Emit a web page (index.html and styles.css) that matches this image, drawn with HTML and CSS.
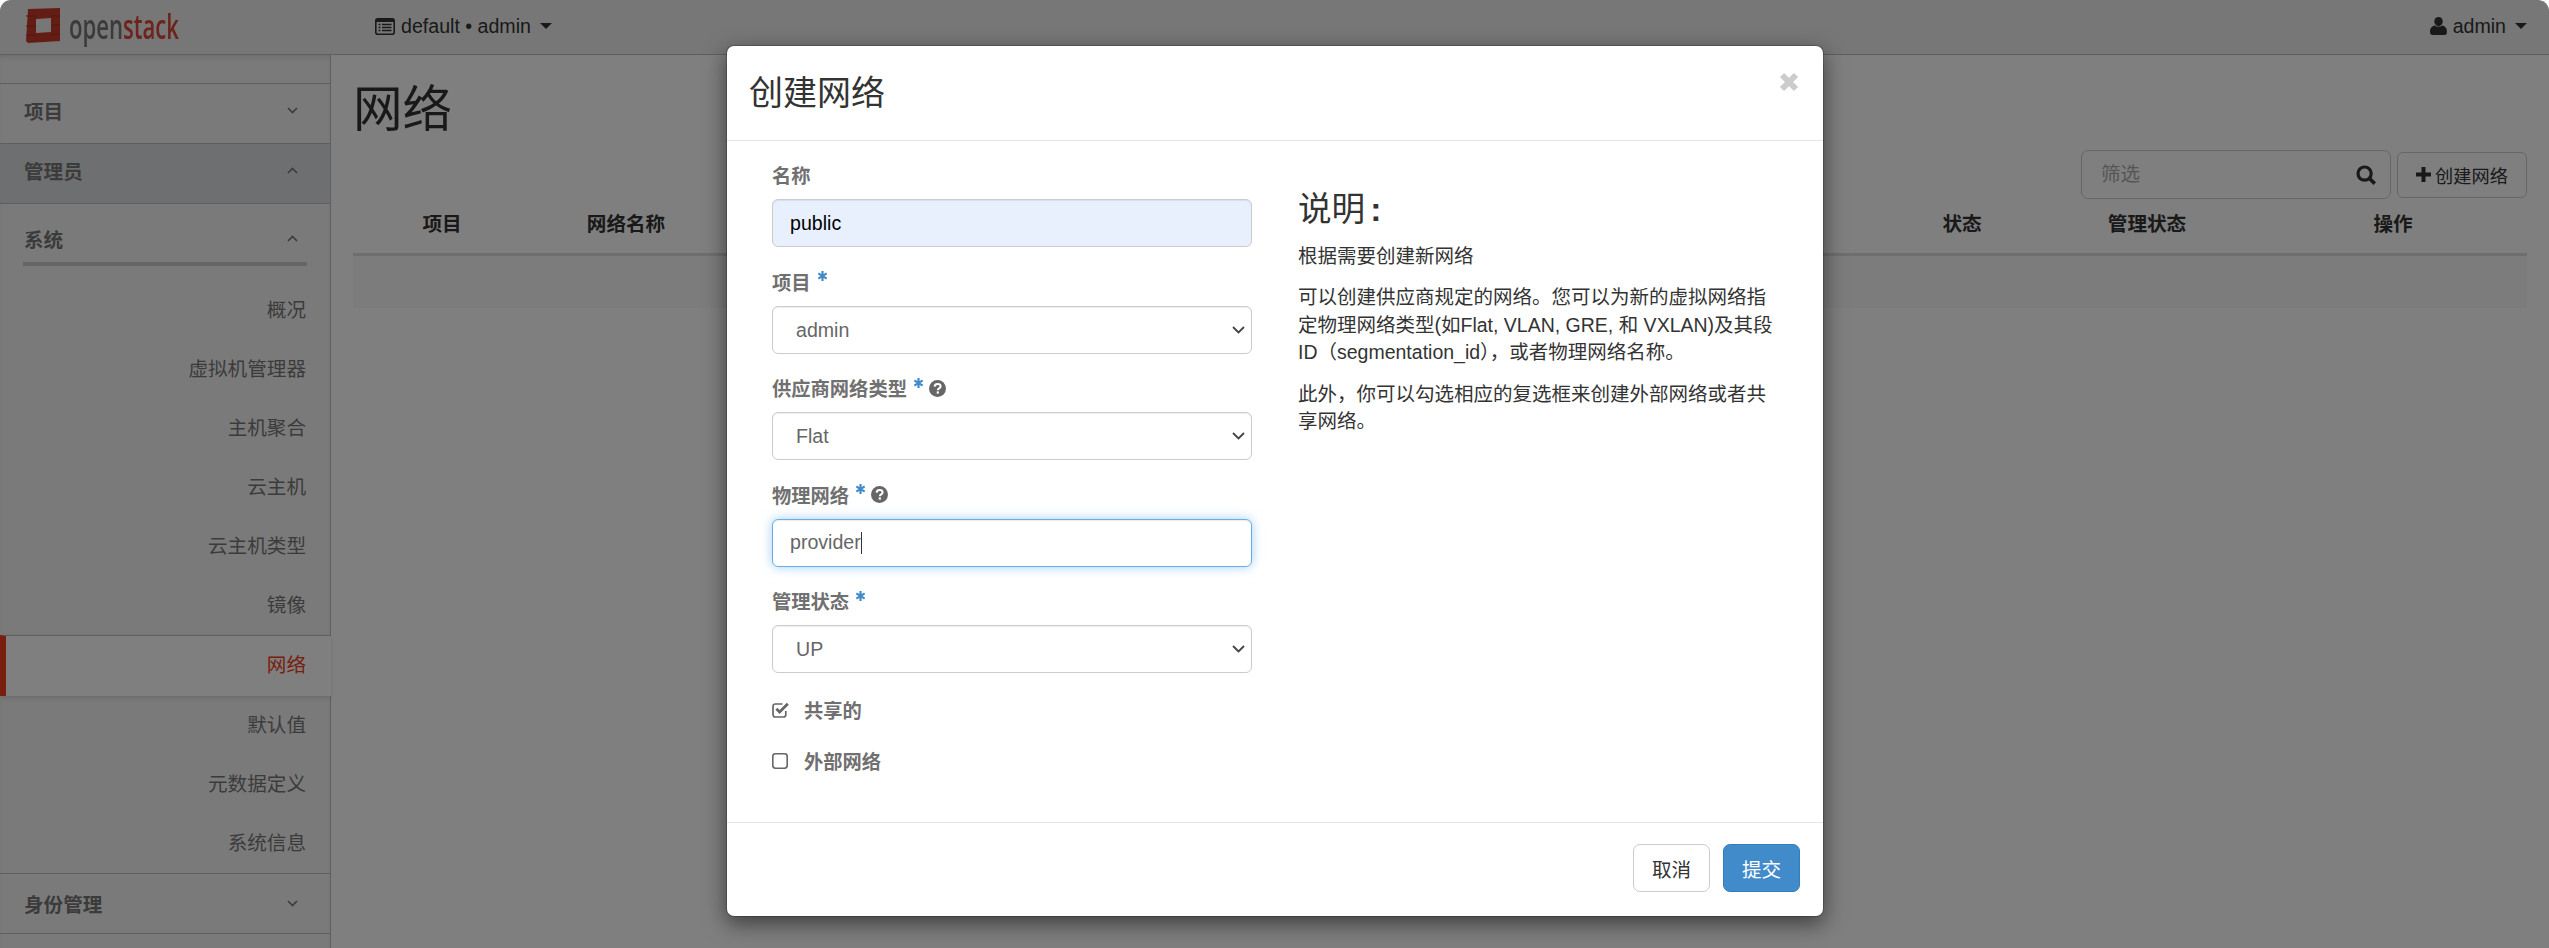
FILE: index.html
```html
<!DOCTYPE html>
<html>
  <head>
    <meta charset="utf-8">
    <meta name="viewport" content="width=device-width, initial-scale=1">
    <title>网络 - OpenStack Dashboard</title>
    <link rel="stylesheet" href="styles.css">
  </head>
  <body>
    <div class="page">

      <!-- navbar -->
      <div class="navbar">
        <div class="brand">
          <svg class="brand_mark" width="36" height="36" viewBox="0 0 36 36">
            <path d="M3 1L35 0L35 33L3 35L1 33Z M11 11L11 25L26 24L26 10Z" fill="#c93a2a" fill-rule="evenodd"/>
            <path d="M1 8H11M1 18H11M1 27H11M26 8H35M26 17H35M26 26H35" stroke="#a82a1c" stroke-width="1"/>
          </svg>
          <span class="brand_txt"><span class="brand_open">open</span><span class="brand_stack">stack</span></span>
        </div>
        <div class="nav_item">
          <svg width="20" height="17" viewBox="0 0 20 17">
            <rect x=".8" y=".8" width="18.4" height="15.4" rx="2" fill="none" stroke="#333" stroke-width="1.6"/>
            <path d="M1 1H19V4H1Z" fill="#333"/>
            <path d="M3.5 6.5H5.5M7 6.5H16.5M3.5 9.5H5.5M7 9.5H16.5M3.5 12.5H5.5M7 12.5H16.5" stroke="#333" stroke-width="1.6"/>
          </svg>
          <span>default • admin</span>
          <span class="caret"></span>
        </div>
        <div class="nav_item nav_right">
          <svg width="17" height="18" viewBox="0 0 17 18">
            <ellipse cx="8.5" cy="4.6" rx="4.2" ry="4.6" fill="#333"/>
            <path d="M0 15C0 11 2 9.2 4.8 8.6C6.8 10.2 10.2 10.2 12.2 8.6C15 9.2 17 11 17 15C17 17 16 18 14.5 18H2.5C1 18 0 17 0 15Z" fill="#333"/>
          </svg>
          <span>admin</span>
          <span class="caret"></span>
        </div>
      </div>

      <div class="main">

        <!-- sidebar -->
        <div class="sidebar">
          <div class="side_head">项目
            <svg class="chev" width="11" height="7" viewBox="0 0 11 7"><path d="M1 1L5.5 5.5L10 1"/></svg>
          </div>
          <div class="side_head side_head-open">管理员
            <svg class="chev" width="11" height="7" viewBox="0 0 11 7"><path d="M1 6L5.5 1.5L10 6"/></svg>
          </div>
          <div class="side_group">
            <span>系统</span>
            <svg class="chev" width="11" height="7" viewBox="0 0 11 7"><path d="M1 6L5.5 1.5L10 6"/></svg>
          </div>
          <a class="side_link">概况</a>
          <a class="side_link">虚拟机管理器</a>
          <a class="side_link">主机聚合</a>
          <a class="side_link">云主机</a>
          <a class="side_link">云主机类型</a>
          <a class="side_link">镜像</a>
          <a class="side_link side_link-active">网络</a>
          <a class="side_link">默认值</a>
          <a class="side_link">元数据定义</a>
          <a class="side_link">系统信息</a>
          <div class="side_head side_head-line">身份管理
            <svg class="chev" width="11" height="7" viewBox="0 0 11 7"><path d="M1 1L5.5 5.5L10 1"/></svg>
          </div>
        </div>

        <!-- content -->
        <div class="content">
          <h1 class="page_title">网络</h1>
          <div class="toolbar">
            <div class="filter_box">
              <input type="text" class="filter_input" placeholder="筛选">
              <svg width="21" height="20" viewBox="0 0 21 20">
                <circle cx="8.6" cy="8.6" r="6.6" fill="none" stroke="#333" stroke-width="3.2"/>
                <path d="M13.5 13.5L18.8 18.6" stroke="#333" stroke-width="3.6"/>
              </svg>
            </div>
            <button class="btn_create">
              <svg width="15" height="15" viewBox="0 0 15 15"><path d="M5.5 0H9.5V5.5H15V9.5H9.5V15H5.5V9.5H0V5.5H5.5Z" fill="#333"/></svg>
              创建网络
            </button>
          </div>
          <table class="net_table">
            <thead>
              <tr>
                <th class="col_project">项目</th>
                <th class="col_name">网络名称</th>
                <th class="col_hidden"></th>
                <th class="col_status">状态</th>
                <th class="col_admin">管理状态</th>
                <th class="col_action">操作</th>
              </tr>
            </thead>
            <tbody>
              <tr><td colspan="6"></td></tr>
            </tbody>
          </table>
        </div>
      </div>

      <div class="backdrop"></div>

      <!-- modal -->
      <div class="modal_wrap">
        <div class="modal">
          <div class="modal_header">
            <h3 class="modal_title">创建网络</h3>
            <svg class="modal_close" width="20" height="20" viewBox="0 0 20 20"><path d="M3 3L17 17M17 3L3 17" stroke="#ccc" stroke-width="6"/></svg>
          </div>
          <div class="modal_body">
            <div class="form_col">
              <div class="field">
                <label class="field_label">名称</label>
                <input type="text" class="form_ctrl form_ctrl-auto" value="public">
              </div>
              <div class="field">
                <label class="field_label">项目
                  <svg class="req" width="9" height="10" viewBox="0 0 9 10"><path d="M4.5 0V10M.3 2.5L8.7 7.5M8.7 2.5L.3 7.5" stroke="#428bca" stroke-width="2.2"/></svg>
                </label>
                <select class="form_ctrl form_select"><option>admin</option></select>
              </div>
              <div class="field">
                <label class="field_label">供应商网络类型
                  <svg class="req" width="9" height="10" viewBox="0 0 9 10"><path d="M4.5 0V10M.3 2.5L8.7 7.5M8.7 2.5L.3 7.5" stroke="#428bca" stroke-width="2.2"/></svg>
                  <svg class="help" width="17" height="17" viewBox="0 0 17 17">
                    <circle cx="8.5" cy="8.5" r="8.5" fill="#666"/>
                    <path d="M5.6 6.6C5.8 4.8 7 4 8.6 4C10.4 4 11.6 5 11.6 6.4C11.6 8.4 8.8 8.4 8.8 10.2" fill="none" stroke="#fff" stroke-width="2"/>
                    <rect x="7.7" y="11.4" width="2.2" height="2.2" fill="#fff"/>
                  </svg>
                </label>
                <select class="form_ctrl form_select"><option>Flat</option></select>
              </div>
              <div class="field">
                <label class="field_label">物理网络
                  <svg class="req" width="9" height="10" viewBox="0 0 9 10"><path d="M4.5 0V10M.3 2.5L8.7 7.5M8.7 2.5L.3 7.5" stroke="#428bca" stroke-width="2.2"/></svg>
                  <svg class="help" width="17" height="17" viewBox="0 0 17 17">
                    <circle cx="8.5" cy="8.5" r="8.5" fill="#666"/>
                    <path d="M5.6 6.6C5.8 4.8 7 4 8.6 4C10.4 4 11.6 5 11.6 6.4C11.6 8.4 8.8 8.4 8.8 10.2" fill="none" stroke="#fff" stroke-width="2"/>
                    <rect x="7.7" y="11.4" width="2.2" height="2.2" fill="#fff"/>
                  </svg>
                </label>
                <div class="caret_wrap">
                  <input type="text" class="form_ctrl form_ctrl-focus" value="provider">
                  <span class="text_caret"></span>
                </div>
              </div>
              <div class="field field-last">
                <label class="field_label">管理状态
                  <svg class="req" width="9" height="10" viewBox="0 0 9 10"><path d="M4.5 0V10M.3 2.5L8.7 7.5M8.7 2.5L.3 7.5" stroke="#428bca" stroke-width="2.2"/></svg>
                </label>
                <select class="form_ctrl form_select"><option>UP</option></select>
              </div>
              <div class="check_row">
                <svg width="18" height="16" viewBox="0 0 18 16">
                  <path d="M13.8 9V12.5C13.8 14 12.9 15 11.5 15H3.3C1.9 15 1 14 1 12.5V4.3C1 2.9 1.9 2 3.3 2H10.5" fill="none" stroke="#666" stroke-width="1.7"/>
                  <path d="M4.4 6.8L7.6 10L15.8 1.8" fill="none" stroke="#666" stroke-width="2.8"/>
                </svg>
                <span>共享的</span>
              </div>
              <div class="check_row">
                <svg width="18" height="16" viewBox="0 0 18 16">
                  <rect x=".8" y=".8" width="14.4" height="14.4" rx="2.6" fill="none" stroke="#666" stroke-width="1.6"/>
                </svg>
                <span>外部网络</span>
              </div>
            </div>
            <div class="help_col">
              <h3 class="help_title">说明<b class="help_colon">:</b></h3>
              <p>根据需要创建新网络</p>
              <p>可以创建供应商规定的网络。您可以为新的虚拟网络指定物理网络类型(如Flat, VLAN, GRE, 和 VXLAN)及其段ID（segmentation_id），或者物理网络名称。</p>
              <p>此外，你可以勾选相应的复选框来创建外部网络或者共享网络。</p>
            </div>
          </div>
          <div class="modal_footer">
            <button class="btn">取消</button>
            <button class="btn btn-primary">提交</button>
          </div>
        </div>
      </div>

    </div>
  </body>
</html>
```

FILE: styles.css
```css
html, body{
  margin: 0;
  padding: 0;
  height: 100%;
  background-color: #FFFFFF;
  overflow: hidden;
}
body, input, select, button{
  font-family: "Liberation Sans", "Noto Sans CJK SC", sans-serif;
  font-size: 19.6px;
}
.page{
  position: relative;
  height: 100%;
  background: #FFFFFF;
  color: #333333;
  border-radius: 11px 11px 0 0;
  overflow: hidden;
}
.backdrop{
  position: absolute;
  top: 0;
  left: 0;
  width: 100%;
  height: 100%;
  background: rgba(0, 0, 0, .5);
}

/* navbar */
.navbar{
  display: flex;
  align-items: center;
  box-sizing: border-box;
  height: 55px;
  padding: 0 22px 2px 25px;
  background: #EEEEEE;
  border-bottom: 1px solid #BFBFBF;
}
.brand{
  display: flex;
  align-items: center;
  width: 350px;
}
.brand_mark{
  filter: blur(.6px);
}
.brand_txt{
  display: inline-block;
  width: 108px;
  margin-left: 8px;
  font-family: "Open Sans", sans-serif;
  font-size: 34px;
  font-weight: 600;
  line-height: 36px;
  white-space: nowrap;
  transform: scaleX(.65);
  transform-origin: left center;
  filter: blur(.5px);
}
.brand_open{
  color: #777777;
}
.brand_stack{
  color: #D8483A;
}
.nav_item{
  display: flex;
  align-items: center;
  gap: 6px;
  color: #333333;
}
.nav_right{
  margin-left: auto;
}
.caret{
  width: 0;
  height: 0;
  margin-left: 3px;
  border-top: 6.5px solid #333333;
  border-left: 6px solid transparent;
  border-right: 6px solid transparent;
}

/* layout */
.main{
  display: flex;
  height: 893px;
}
.sidebar{
  flex: none;
  box-sizing: border-box;
  width: 331px;
  padding-top: 28px;
  background: #F5F5F5;
  border-right: 1px solid #BFBFBF;
  box-shadow: inset 0 5px 6px -3px rgba(0, 0, 0, .12);
  color: #777777;
}
.side_head{
  display: flex;
  align-items: center;
  justify-content: space-between;
  box-sizing: border-box;
  height: 60px;
  padding: 0 32px 6px 24px;
  border-top: 1px solid #BFBFBF;
  font-weight: bold;
}
.side_head-open{
  height: 61px;
  margin-bottom: -1px;
  background: #DBDEE1;
  border-bottom: 1px solid #BFBFBF;
}
.side_head-line{
  height: 61px;
  padding-bottom: 0;
  border-bottom: 1px solid #BFBFBF;
}
.side_group{
  display: flex;
  align-items: center;
  justify-content: space-between;
  box-sizing: border-box;
  height: 63px;
  margin: 0 23px 15px;
  padding: 12px 9px 0 1px;
  font-weight: bold;
  border-bottom: 4px solid #CCCCCC;
}
.chev{
  flex: none;
}
.chev path{
  fill: none;
  stroke: #777777;
  stroke-width: 1.6;
}
.side_link{
  display: block;
  height: 59px;
  padding-right: 24px;
  line-height: 59px;
  text-align: right;
}
.side_link-active{
  position: relative;
  box-sizing: border-box;
  height: 61px;
  margin-right: -1px;
  padding-right: 25px;
  background: #FFFFFF;
  border-top: 1px solid #BFBFBF;
  border-left: 6px solid #F03E20;
  box-shadow: 0 2px 5px rgba(0, 0, 0, .12);
  color: #F03E20;
}
.content{
  flex: 1;
  min-width: 0;
  padding: 0 22px;
}
.page_title{
  margin: 28px 0 0;
  font-size: 49.6px;
  font-weight: normal;
  line-height: 55px;
  color: #333333;
}
.toolbar{
  display: flex;
  align-items: center;
  justify-content: flex-end;
  gap: 6px;
  height: 49px;
  margin-top: 12px;
}
.filter_box{
  display: flex;
  align-items: center;
  box-sizing: border-box;
  width: 310px;
  height: 49px;
  padding: 0 13px 0 19px;
  background: #FFFFFF;
  border: 1px solid #CCCCCC;
  border-radius: 7px;
}
.filter_input{
  flex: 1;
  min-width: 0;
  padding: 0;
  border: none;
  outline: none;
  background: none;
}
.filter_input::placeholder{
  color: #AAAAAA;
}
.btn_create{
  display: flex;
  align-items: center;
  justify-content: center;
  gap: 4px;
  box-sizing: border-box;
  width: 130px;
  height: 46px;
  padding: 0;
  background: #FFFFFF;
  border: 1px solid #CCCCCC;
  border-radius: 6px;
  color: #333333;
  font-size: 18.2px;
}
.net_table{
  width: 100%;
  table-layout: fixed;
  border-collapse: collapse;
}
.net_table th{
  box-sizing: border-box;
  height: 55px;
  padding: 0 0 6px;
  border-bottom: 3px solid #DDDDDD;
  text-align: center;
  font-weight: bold;
}
.net_table td{
  height: 52px;
  padding: 0;
  background: #F9F9F9;
}
.col_project{ width: 178px; }
.col_name{ width: 190px; }
.col_status{ width: 146px; }
.col_admin{ width: 224px; }
.col_action{ width: 268px; }

/* modal */
.modal_wrap{
  position: absolute;
  top: 0;
  left: 0;
  box-sizing: border-box;
  width: 100%;
  display: flex;
  justify-content: center;
  padding: 45px 0 0 1px;
}
.modal{
  display: flex;
  flex-direction: column;
  box-sizing: border-box;
  width: 1098px;
  height: 872px;
  background: #FFFFFF;
  border: 1px solid rgba(0, 0, 0, .2);
  background-clip: padding-box;
  border-radius: 8px;
  box-shadow: 0 7px 21px rgba(0, 0, 0, .5);
}
.modal_header{
  display: flex;
  align-items: center;
  justify-content: space-between;
  box-sizing: border-box;
  flex: none;
  height: 95px;
  padding: 0 24px 0 22px;
  border-bottom: 1px solid #E5E5E5;
}
.modal_title{
  margin: 0;
  font-size: 34px;
  font-weight: normal;
  line-height: 37px;
}
.modal_close{
  margin-bottom: 22px;
}
.modal_body{
  flex: 1;
  display: flex;
  gap: 46px;
  padding: 20px 0 0 45px;
}
.form_col{
  flex: none;
  width: 480px;
}
.field{
  margin-bottom: 20.6px;
}
.field-last{
  margin-bottom: 22.6px;
}
.field_label{
  display: flex;
  align-items: center;
  height: 28px;
  margin-bottom: 10px;
  color: #707070;
  font-size: 19.3px;
  font-weight: bold;
  white-space: nowrap;
}
.req{
  margin: 0 0 11px 7px;
}
.help{
  margin-left: 6px;
}
.form_ctrl{
  display: block;
  box-sizing: border-box;
  width: 100%;
  height: 48px;
  padding: 0 17px;
  background-color: #FFFFFF;
  border: 1px solid #CCCCCC;
  border-radius: 6px;
  box-shadow: inset 0 1px 1px rgba(0, 0, 0, .075);
  color: #666666;
  outline: none;
}
.form_ctrl-auto{
  background-color: #E8F0FE;
  color: #000000;
}
.form_ctrl-focus{
  border-color: #66AFE9;
  box-shadow: inset 0 1px 1px rgba(0, 0, 0, .075), 0 0 11px rgba(102, 175, 233, .6);
}
.form_select{
  appearance: none;
  padding-left: 23px;
  background-image: url("data:image/svg+xml,%3Csvg xmlns='http://www.w3.org/2000/svg' width='13' height='8' viewBox='0 0 13 8'%3E%3Cpath d='M1 1L6.5 6.5L12 1' fill='none' stroke='%23444' stroke-width='1.8'/%3E%3C/svg%3E");
  background-repeat: no-repeat;
  background-position: right 6px center;
}
.caret_wrap{
  position: relative;
}
.text_caret{
  position: absolute;
  left: 89px;
  top: 13px;
  width: 1px;
  height: 22px;
  background: #333333;
}
.check_row{
  display: flex;
  align-items: center;
  gap: 14px;
  height: 28px;
  margin-bottom: 23px;
  color: #707070;
  font-size: 19.3px;
  font-weight: bold;
}
.help_col{
  flex: none;
  width: 482px;
  padding-top: 30px;
  font-size: 19.5px;
  line-height: 27.44px;
}
.help_title{
  margin: 0 0 15px;
  font-size: 33.6px;
  font-weight: normal;
  line-height: 37px;
}
.help_colon{
  margin-left: 5px;
}
.help_col p{
  margin: 0 0 14px;
}
.modal_footer{
  display: flex;
  align-items: center;
  justify-content: flex-end;
  gap: 13px;
  box-sizing: border-box;
  flex: none;
  height: 94px;
  padding: 0 23px 3px;
  border-top: 1px solid #E5E5E5;
}
.btn{
  box-sizing: border-box;
  width: 77px;
  height: 48px;
  padding: 0;
  background: #FFFFFF;
  border: 1px solid #CCCCCC;
  border-radius: 7px;
  color: #333333;
}
.btn-primary{
  background: #428BCA;
  border-color: #357EBD;
  color: #FFFFFF;
}
```
